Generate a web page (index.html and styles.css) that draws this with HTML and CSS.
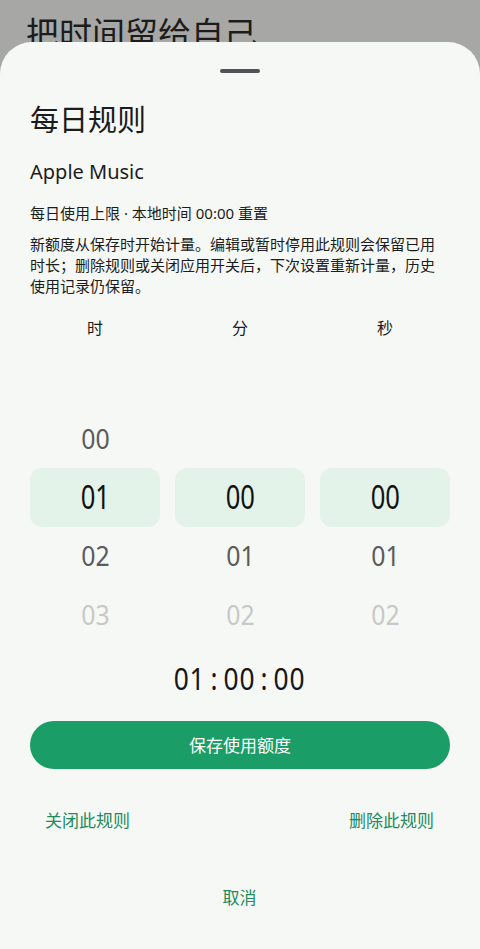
FILE: index.html
```html
<!DOCTYPE html>
<html lang="zh-CN">
<head>
    <meta charset="UTF-8">
    <title>每日规则</title>
    <link rel="stylesheet" href="styles.css">
</head>
<body>
    <div class="page">
        <h2 class="page-title">把时间留给自己</h2>
    </div>

    <div class="sheet">
        <div class="handle"></div>
        <h1>每日规则</h1>
        <p class="app-name">Apple Music</p>
        <p class="limit">每日使用上限 · 本地时间 00:00 重置</p>
        <p class="note">新额度从保存时开始计量。编辑或暂时停用此规则会保留已用时长；删除规则或关闭应用开关后，下次设置重新计量，历史使用记录仍保留。</p>

        <div class="picker">
            <div class="picker-col">
                <div class="picker-label">时</div>
                <div class="wheel-row"></div>
                <div class="wheel-row"><span>00</span></div>
                <div class="wheel-row selected"><span>01</span></div>
                <div class="wheel-row"><span>02</span></div>
                <div class="wheel-row far"><span>03</span></div>
            </div>
            <div class="picker-col">
                <div class="picker-label">分</div>
                <div class="wheel-row"></div>
                <div class="wheel-row"></div>
                <div class="wheel-row selected"><span>00</span></div>
                <div class="wheel-row"><span>01</span></div>
                <div class="wheel-row far"><span>02</span></div>
            </div>
            <div class="picker-col">
                <div class="picker-label">秒</div>
                <div class="wheel-row"></div>
                <div class="wheel-row"></div>
                <div class="wheel-row selected"><span>00</span></div>
                <div class="wheel-row"><span>01</span></div>
                <div class="wheel-row far"><span>02</span></div>
            </div>
        </div>

        <div class="total"><span class="total-value">01<span class="sep">:</span>00<span class="sep">:</span>00</span></div>

        <button class="btn-save">保存使用额度</button>

        <div class="actions">
            <button class="text-btn">关闭此规则</button>
            <button class="text-btn">删除此规则</button>
        </div>

        <button class="text-btn cancel">取消</button>
    </div>
</body>
</html>
```

FILE: styles.css
```css
:root {
    --scrim: #a7a7a6;
    --sheet: #f6f8f6;
    --green: #1a9d66;
    --green-text: #238a5b;
    --pick: #e3f3ea;
    --text: #1b1c1c;
}

* {
    box-sizing: border-box;
}

body {
    margin: 0;
    height: 949px;
    overflow: hidden;
    background: var(--scrim);
    font-family: "Noto Sans", "Noto Sans CJK SC", sans-serif;
    color: var(--text);
}

.page-title {
    margin: 0;
    padding: 12px 26px;
    font-size: 33px;
    font-weight: 400;
    line-height: 44px;
    color: #1c1c1c;
}

/* bottom sheet over the page */
.sheet {
    position: fixed;
    top: 42px;
    left: 0;
    right: 0;
    bottom: 0;
    display: flex;
    flex-direction: column;
    padding: 27px 30px 0;
    background: var(--sheet);
    border-radius: 32px 32px 0 0;
}

.handle {
    align-self: center;
    width: 40px;
    height: 4px;
    border-radius: 2px;
    background: #4f5257;
}

.sheet h1 {
    margin: 29px 0 0;
    font-size: 29px;
    font-weight: 400;
    line-height: 36px;
}

.app-name {
    margin: 20px 0 0;
    font-size: 20px;
    line-height: 28px;
}

.limit {
    margin: 16px 0 0;
    font-size: 15px;
    line-height: 22px;
}

.note {
    margin: 10px 8px 0 0;
    font-size: 15px;
    line-height: 21px;
}

.picker {
    display: grid;
    grid-template-columns: repeat(3, 1fr);
    column-gap: 15px;
    margin-top: 20px;
}

.picker-col {
    display: flex;
    flex-direction: column;
    text-align: center;
}

.picker-label {
    margin-bottom: 12px;
    font-size: 16px;
    line-height: 22px;
}

.wheel-row {
    display: flex;
    align-items: center;
    justify-content: center;
    height: 58.5px;
    font-size: 27px;
    color: #5b5b5b;
}

/* the picker digits are narrower than Noto's */
.wheel-row span {
    display: inline-block;
    transform: scaleX(0.92);
    line-height: 1;
}

.wheel-row.selected {
    background: var(--pick);
    border-radius: 12px;
    font-size: 32px;
    color: #121212;
}

.wheel-row.selected span {
    transform: scaleX(0.8);
}

.wheel-row.far {
    color: #c8c8c8;
}

.total {
    margin-top: 14px;
    text-align: center;
    font-size: 31px;
    line-height: 40px;
    color: #161616;
}

.total-value {
    display: inline-block;
    transform: scaleX(0.85);
    letter-spacing: 1px;
}

.total .sep {
    margin: 0 6px;
}

.btn-save {
    margin-top: 23px;
    height: 48px;
    border: none;
    border-radius: 24px;
    background: var(--green);
    color: white;
    font-family: inherit;
    font-size: 17px;
    cursor: pointer;
}

.actions {
    display: flex;
    justify-content: space-between;
    margin-top: 28px;
}

.text-btn {
    padding: 12px 16px 12px 15px;
    border: none;
    background: none;
    color: var(--green-text);
    font-family: inherit;
    font-size: 17px;
    line-height: 24px;
    cursor: pointer;
}

.cancel {
    align-self: center;
    margin-top: 29px;
}
```
